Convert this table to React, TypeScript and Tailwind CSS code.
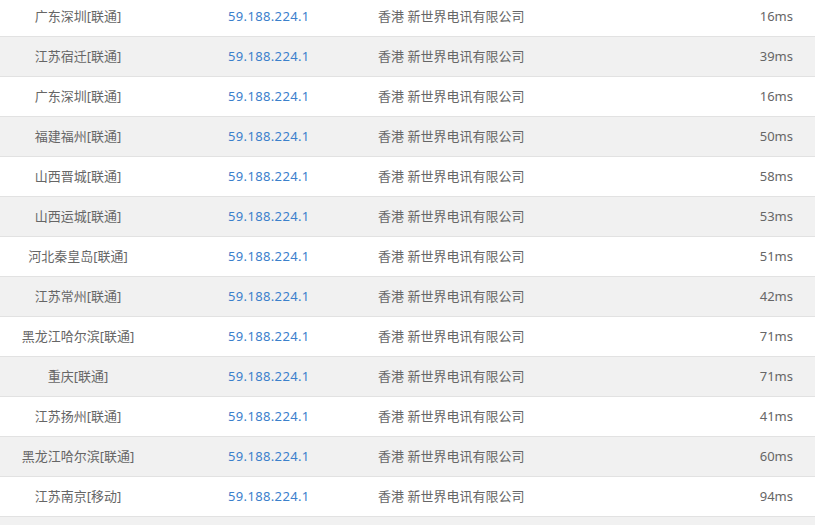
const rows = [
  { loc: '广东深圳[联通]', ms: '16ms' },
  { loc: '江苏宿迁[联通]', ms: '39ms' },
  { loc: '广东深圳[联通]', ms: '16ms' },
  { loc: '福建福州[联通]', ms: '50ms' },
  { loc: '山西晋城[联通]', ms: '58ms' },
  { loc: '山西运城[联通]', ms: '53ms' },
  { loc: '河北秦皇岛[联通]', ms: '51ms' },
  { loc: '江苏常州[联通]', ms: '42ms' },
  { loc: '黑龙江哈尔滨[联通]', ms: '71ms' },
  { loc: '重庆[联通]', ms: '71ms' },
  { loc: '江苏扬州[联通]', ms: '41ms' },
  { loc: '黑龙江哈尔滨[联通]', ms: '60ms' },
  { loc: '江苏南京[移动]', ms: '94ms' },
  { loc: '', ms: '' },
];

export default function App() {
  return (
    <div
      className="w-[815px] h-[525px] overflow-hidden bg-white text-[13px] text-[#666]"
      style={{ fontFamily: '"Noto Sans", "Noto Sans CJK SC", sans-serif' }}
    >
      <div className="-mt-[3px]">
        {rows.map((r, i) => (
          <div
            key={i}
            className={`flex items-center h-[40px] border-b border-[#e2e2e2] ${
              i % 2 === 1 ? 'bg-[#f1f1f1]' : 'bg-white'
            }`}
          >
            <div className="w-[156px] text-center">{r.loc}</div>
            <div className="w-[222px] pl-[72px] text-[#3b80cc] tracking-[0.35px]">
              {r.loc && '59.188.224.1'}
            </div>
            <div className="flex-1">{r.loc && '香港 新世界电讯有限公司'}</div>
            <div className="pr-[22px] text-right">{r.ms}</div>
          </div>
        ))}
      </div>
    </div>
  );
}
